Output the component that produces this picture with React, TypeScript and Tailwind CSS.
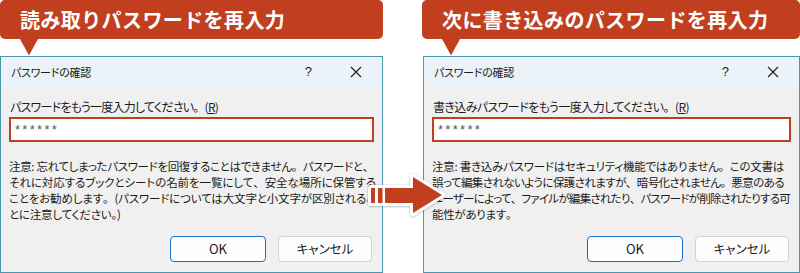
import React from "react";

const jp = "font-['Noto_Sans_CJK_JP','Noto_Sans',sans-serif]";

function T({ s }: { s: string }) {
  const parts = s.split(/([、。])/);
  return (
    <>
      {parts.map((p, i) =>
        p === "、" || p === "。" ? (
          <span key={i} className="[font-feature-settings:normal]">{p}</span>
        ) : (
          <React.Fragment key={i}>{p}</React.Fragment>
        )
      )}
    </>
  );
}

function Banner({ text }: { text: string }) {
  return (
    <div className="relative">
      <div className="flex h-[39px] items-center rounded-[5px] bg-[#c13f1f] pl-[20px]">
        <span className={`${jp} text-[20px] font-bold leading-none tracking-[0.4px] text-white`}>{text}</span>
      </div>
      <div className="h-[17px] pl-[20px]">
        <svg width="18" height="17" viewBox="0 0 18 17">
          <polygon points="0,0 18,0 9,16.5" fill="#c13f1f" />
        </svg>
      </div>
    </div>
  );
}

type Line = { t: string; c: string };

function Dialog({ label, labelCls, lines }: { label: string; labelCls: string; lines: Line[] }) {
  return (
    <div className={`${jp} border border-[#4a97b0] bg-[#f0f0f0] text-[#1b1b1b] [font-feature-settings:'palt']`}>
      <div className="flex h-[30px] items-center bg-[#ebf3f9] pl-[10px] pr-[20px]">
        <span className="flex-1 text-[11px] tracking-[-0.28px]">パスワードの確認</span>
        <span className="mr-[38px] font-['Liberation_Sans',sans-serif] text-[13px]">?</span>
        <svg width="12" height="12" viewBox="0 0 12 12">
          <path d="M1 1 L11 11 M11 1 L1 11" stroke="#1b1b1b" strokeWidth="1.1" fill="none" />
        </svg>
      </div>
      <div className="px-[8px] pb-[10px] pt-[12px]">
        <div className={`h-[16px] whitespace-nowrap pl-[1px] text-[12px] leading-[16px] ${labelCls}`}>
          <T s={label} />(<span className="underline">R</span>)
        </div>
        <div className="mt-[2px] flex h-[25px] items-center border-2 border-[#c13f1f] bg-white pl-[4px]">
          <span className="font-['Liberation_Sans',sans-serif] text-[13px] tracking-[2.3px] text-[#555]">******</span>
        </div>
        <div className="mt-[16px] text-[11.5px] leading-[16px]">
          {lines.map((l, i) => (
            <div key={i} className={`whitespace-nowrap ${l.c}`}>
              <T s={l.t} />
            </div>
          ))}
        </div>
        <div className="mt-[14px] flex justify-end gap-[12px] pr-[2px]">
          <div className="flex h-[26px] w-[96px] items-center justify-center rounded-[4px] border border-[#1a6fc4] bg-[#fdfdfd] text-[13px]">OK</div>
          <div className="flex h-[26px] w-[94px] items-center justify-center rounded-[4px] border border-[#d2d2d2] bg-[#fdfdfd] text-[12.5px]">キャンセル</div>
        </div>
      </div>
    </div>
  );
}

export default function App() {
  return (
    <div className="relative h-[273px] w-[800px] overflow-hidden bg-white">
      <div className="flex">
        <div className="w-[383px]">
          <Banner text="読み取りパスワードを再入力" />
          <Dialog
            label="パスワードをもう一度入力してください。"
            labelCls="tracking-[-0.76px]"
            lines={[
              { t: "注意: 忘れてしまったパスワードを回復することはできません。パスワードと、", c: "tracking-[-0.34px]" },
              { t: "それに対応するブックとシートの名前を一覧にして、安全な場所に保管する", c: "tracking-[-0.07px]" },
              { t: "ことをお勧めします。(パスワードについては大文字と小文字が区別されるこ", c: "tracking-[-0.15px]" },
              { t: "とに注意してください。)", c: "tracking-[-0.2px]" },
            ]}
          />
        </div>
        <div className="ml-[39px] w-[378px]">
          <Banner text="次に書き込みのパスワードを再入力" />
          <div className="ml-[1px]">
            <Dialog
              label="書き込みパスワードをもう一度入力してください。"
              labelCls="tracking-[-0.58px]"
              lines={[
                { t: "注意: 書き込みパスワードはセキュリティ機能ではありません。この文書は", c: "tracking-[-0.25px]" },
                { t: "誤って編集されないように保護されますが、暗号化されません。悪意のある", c: "tracking-[-0.59px]" },
                { t: "ユーザーによって、ファイルが編集されたり、パスワードが削除されたりする可", c: "tracking-[-0.74px]" },
                { t: "能性があります。", c: "tracking-[-0.3px]" },
              ]}
            />
          </div>
        </div>
      </div>
      <svg
        className="absolute left-[360px] top-[170px]"
        width="90"
        height="52"
        viewBox="0 0 90 52"
      >
        <defs>
          <filter id="sh" x="-20%" y="-20%" width="140%" height="140%">
            <feDropShadow dx="0" dy="0.5" stdDeviation="1.2" floodColor="#000" floodOpacity="0.35" />
          </filter>
        </defs>
        <g filter="url(#sh)">
          <g stroke="#fff" strokeWidth="6" strokeLinejoin="round" fill="#fff">
            <rect x="11" y="18" width="4" height="15" />
            <rect x="18" y="18" width="4.5" height="15" />
            <polygon points="25,18 53,18 53,7 82,25 53,43 53,33 25,33" />
          </g>
        </g>
        <g fill="#c13f1f">
          <rect x="11" y="18" width="4" height="15" />
          <rect x="18" y="18" width="4.5" height="15" />
          <polygon points="25,18 53,18 53,7 82,25 53,43 53,33 25,33" />
        </g>
      </svg>
    </div>
  );
}
